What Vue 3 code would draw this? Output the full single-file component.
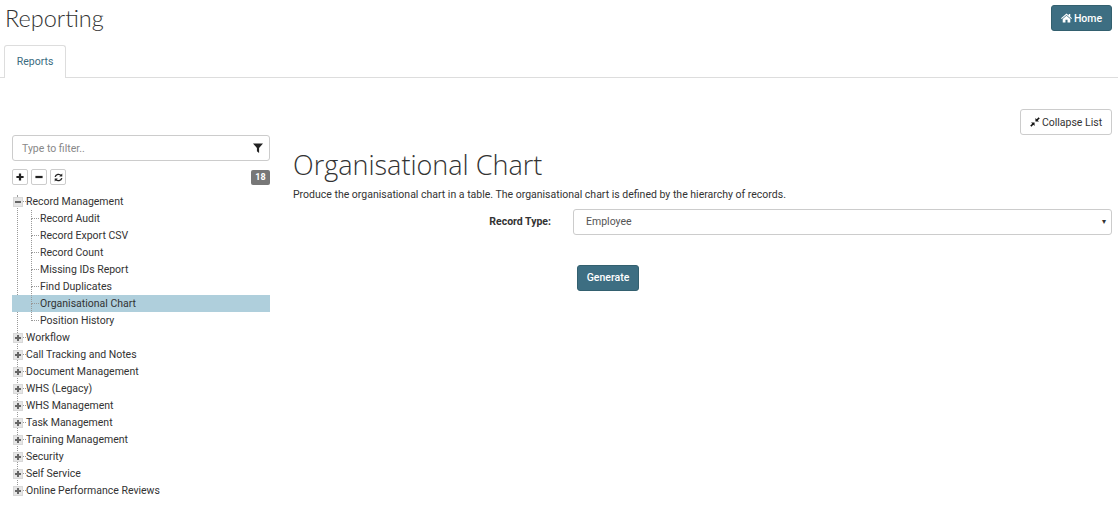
<script setup>
const children = ['Record Audit', 'Record Export CSV', 'Record Count', 'Missing IDs Report', 'Find Duplicates', 'Organisational Chart', 'Position History']
const groups = ['Workflow', 'Call Tracking and Notes', 'Document Management', 'WHS (Legacy)', 'WHS Management', 'Task Management', 'Training Management', 'Security', 'Self Service', 'Online Performance Reviews']
</script>

<template>
  <div class="page">
    <header class="top">
      <h1 class="title">Reporting</h1>
      <button class="btn primary home">
        <svg class="ico" viewBox="0 0 16 14" width="11" height="10"><path fill="currentColor" d="M8 0.5 L0 7.2 L1 8.4 L8 2.6 L15 8.4 L16 7.2 L13.5 5.1 V1 H11.3 V3.2 Z M8 3.8 L2.5 8.4 V13.5 H6.5 V9.5 H9.5 V13.5 H13.5 V8.4 Z"/></svg>
        Home
      </button>
    </header>
    <nav class="tabs"><a class="tab">Reports</a></nav>
    <div class="collapse-row">
      <button class="btn plain">
        <svg class="ico" viewBox="0 0 14 14" width="10" height="10"><path fill="#111" d="M7.6 6.4 V1.4 L9.4 3.2 L12 0.3 L13.7 2 L10.8 4.6 L12.6 6.4 Z M6.4 7.6 V12.6 L4.6 10.8 L2 13.7 L0.3 12 L3.2 9.4 L1.4 7.6 Z"/></svg>
        Collapse List
      </button>
    </div>
    <div class="main">
      <aside class="side">
        <div class="filter">
          <span class="ph">Type to filter..</span>
          <svg viewBox="0 0 12 12" width="10" height="10"><path fill="#222" d="M0 0.5 H12 L7.3 6 V12 L4.7 9.8 V6 Z"/></svg>
        </div>
        <div class="tools">
          <button class="tool"><svg viewBox="0 0 10 10" width="8" height="8"><path fill="#222" d="M3.6 0.5 H6.4 V3.6 H9.5 V6.4 H6.4 V9.5 H3.6 V6.4 H0.5 V3.6 H3.6 Z"/></svg></button>
          <button class="tool"><svg viewBox="0 0 10 10" width="8" height="8"><path fill="#222" d="M0.5 3.6 H9.5 V6.4 H0.5 Z"/></svg></button>
          <button class="tool"><svg viewBox="0 0 10 10" width="9" height="9"><path fill="none" stroke="#222" stroke-width="1.5" d="M1.3 4.3 A3.8 3.8 0 0 1 8 3 M8.7 5.7 A3.8 3.8 0 0 1 2 7"/><path fill="#222" d="M9.2 0.6 V4 H5.8 Z M0.8 9.4 V6 H4.2 Z"/></svg></button>
          <span class="badge">18</span>
        </div>
        <ul class="tree">
          <li class="branch open">
            <div class="row"><span class="box"><i class="h"></i></span><span class="dash"></span><span class="lbl">Record Management</span></div>
            <ul class="kids">
              <li v-for="c in children" :key="c" class="kid" :class="{ sel: c === 'Organisational Chart' }">
                <span class="kid-line"></span><span class="lbl">{{ c }}</span>
              </li>
            </ul>
          </li>
          <li v-for="g in groups" :key="g" class="branch">
            <div class="row"><span class="box"><i class="h"></i><i class="v"></i></span><span class="dash"></span><span class="lbl">{{ g }}</span></div>
          </li>
        </ul>
      </aside>
      <section class="content">
        <h2 class="heading">Organisational Chart</h2>
        <p class="desc">Produce the organisational chart in a table. The organisational chart is defined by the hierarchy of records.</p>
        <div class="form-row">
          <label class="form-label">Record Type:</label>
          <div class="select"><span>Employee</span><span class="caret">▾</span></div>
        </div>
        <div class="actions"><button class="btn primary gen">Generate</button></div>
      </section>
    </div>
  </div>
</template>

<style>
html, body { background: #fff; }
</style>

<style scoped>
.page { width: 1118px; height: 513px; overflow: hidden; box-sizing: border-box; font-family: Roboto, sans-serif; font-size: 10.5px; color: #333; }
.top { display: flex; justify-content: space-between; align-items: flex-start; padding: 5px 6px 0 5px; height: 45px; box-sizing: border-box; }
.title { margin: 0; font-family: Lato, sans-serif; font-weight: 300; font-size: 23.5px; line-height: 26px; color: #333; }
.btn { font-family: Roboto, sans-serif; font-size: 10.5px; border-radius: 3px; box-sizing: border-box; cursor: pointer; display: inline-flex; align-items: center; justify-content: center; gap: 2px; padding: 0; }
.primary { background: #3d6e82; color: #fff; border: 1px solid #33606f; font-weight: 500; }
.home { width: 61px; height: 26px; }
.tabs { height: 32px; border-bottom: 1px solid #ddd; padding-left: 4px; display: flex; }
.tab { width: 62px; height: 33px; box-sizing: border-box; padding-bottom: 2px; border: 1px solid #ddd; border-bottom: 0; background: #fff; border-radius: 3px 3px 0 0; color: #3a6b80; display: flex; align-items: center; justify-content: center; }
.collapse-row { display: flex; justify-content: flex-end; padding: 31px 6px 0 0; }
.plain { width: 92px; height: 26px; background: #fff; border: 1px solid #ccc; color: #333; }
.main { display: flex; }
.side { width: 258px; margin-left: 12px; flex: none; }
.filter { height: 26px; box-sizing: border-box; border: 1px solid #ccc; border-radius: 3px; display: flex; align-items: center; justify-content: space-between; padding: 0 6px 0 9px; }
.ph { color: #888; }
.tools { display: flex; gap: 3px; margin-top: 8px; align-items: center; height: 16px; }
.tool { width: 16px; height: 16px; padding: 0; background: #fff; border: 1px solid #ccc; border-radius: 2px; display: flex; align-items: center; justify-content: center; }
.badge { margin-left: auto; width: 19px; height: 15px; background: #777; color: #fff; font-size: 9px; font-weight: 700; border-radius: 2px; display: flex; align-items: center; justify-content: center; }
.tree, .kids { list-style: none; margin: 0; padding: 0; }
.tree { margin-top: 8px; position: relative; }
.tree::before { content: ""; position: absolute; left: 5px; top: 2px; bottom: 8px; border-left: 1px dotted #999; }
.row, .kid { height: 17px; display: flex; align-items: center; position: relative; }
.box { position: relative; z-index: 1; width: 10px; height: 10px; margin-left: 1px; background: #e6e6e6; border: 1px solid #d8d8d8; box-sizing: border-box; flex: none; }
.box .h { position: absolute; left: 1px; right: 1px; top: 3px; height: 2px; background: #666; }
.box .v { position: absolute; top: 1px; bottom: 1px; left: 3px; width: 2px; background: #666; }
.dash { width: 3px; border-top: 1px dotted #999; flex: none; }
.lbl { color: #333; white-space: nowrap; }
.kid { padding-left: 28px; }
.kid-line { position: absolute; left: 19px; top: 8px; width: 8px; border-top: 1px dotted #999; }
.kid-line::before { content: ""; position: absolute; left: 0; top: -9px; height: 9px; border-left: 1px dotted #999; }
.kid:not(:last-child) .kid-line::after { content: ""; position: absolute; left: 0; top: 0; height: 9px; border-left: 1px dotted #999; }
.sel { background: #afcfdc; }
.content { flex: 1; padding: 0 6px 0 23px; min-width: 0; }
.heading { margin: 0; font-family: "Open Sans", sans-serif; font-weight: 300; font-size: 27px; line-height: 36px; color: #333; padding-top: 12px; }
.desc { margin: 3px 0 0; line-height: 17px; }
.form-row { display: flex; align-items: center; margin-top: 6px; }
.form-label { width: 258px; text-align: right; font-weight: 700; flex: none; padding-bottom: 1px; }
.select { margin-left: 22px; flex: 1; height: 26px; box-sizing: border-box; border: 1px solid #ccc; border-radius: 3px; display: flex; align-items: center; justify-content: space-between; padding: 0 5px 2px 12px; color: #555; }
.caret { font-size: 8px; color: #333; }
.actions { padding-left: 284px; margin-top: 30px; }
.gen { width: 62px; height: 26px; padding-bottom: 2px; }
</style>
